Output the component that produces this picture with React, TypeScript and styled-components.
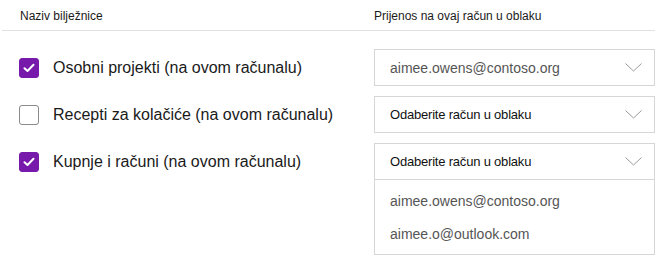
import React from "react";
import styled, { createGlobalStyle } from "styled-components";

const Global = createGlobalStyle`
  html, body { margin: 0; padding: 0; background: #ffffff; }
  body { font-family: "Liberation Sans", Arial, sans-serif; color: #1f1f1f; }
`;

const Page = styled.div`
  width: 653px;
  height: 260px;
  margin-left: 2px;
`;

const HeaderRow = styled.div`
  display: grid;
  grid-template-columns: 372px 281px;
  height: 30px;
  border-bottom: 1px solid #e1e1e1;
  align-items: center;
  font-size: 12px;
  color: #1a1a1a;
`;

const HeaderCell = styled.div<{ $pad: number }>`
  padding-left: ${(p) => p.$pad}px;
  padding-top: 2px;
`;

const Body = styled.div`
  display: flex;
  flex-direction: column;
  gap: 10px;
  padding-top: 18px;
`;

const Row = styled.div`
  display: grid;
  grid-template-columns: 372px 281px;
  align-items: start;
`;

const NameCell = styled.label`
  height: 37px;
  display: flex;
  align-items: center;
  gap: 14px;
  padding-left: 17px;
  font-size: 16px;
  color: #1a1a1a;
`;

const Check = styled.span<{ $on: boolean }>`
  box-sizing: border-box;
  width: 20px;
  height: 20px;
  border-radius: 3px;
  display: flex;
  align-items: center;
  justify-content: center;
  background: ${(p) => (p.$on ? "#7719aa" : "#ffffff")};
  border: 1px solid ${(p) => (p.$on ? "#7719aa" : "#8a8a8a")};
`;

const Select = styled.div`
  box-sizing: border-box;
  width: 281px;
  border: 1px solid #d6d6d6;
  background: #fff;
`;

const SelectHead = styled.div<{ $muted: boolean }>`
  height: 35px;
  display: flex;
  align-items: center;
  justify-content: space-between;
  padding: 0 12px 0 15px;
  font-size: ${(p) => (p.$muted ? "14px" : "13px")};
  color: ${(p) => (p.$muted ? "#555555" : "#111111")};
  ${(p) => (p.$muted ? "" : "letter-spacing: -0.2px;")}
`;

const Menu = styled.ul`
  margin: 0;
  padding: 4px 0 4px;
  list-style: none;
  background: #fff;
  border-top: 1px solid #d6d6d6;
`;

const MenuItem = styled.li`
  height: 33px;
  display: flex;
  align-items: center;
  padding-left: 15px;
  font-size: 14px;
  color: #555555;
`;

const Chevron = () => (
  <svg width="17" height="9" viewBox="0 0 17 9" fill="none">
    <path d="M0.5 0.5 L8.5 8 L16.5 0.5" stroke="#9a9a9a" strokeWidth="1" />
  </svg>
);

const Tick = () => (
  <svg width="12" height="10" viewBox="0 0 12 10" fill="none">
    <path d="M1.5 5.2 L4.5 8 L10.5 1.8" stroke="#ffffff" strokeWidth="2" strokeLinecap="round" strokeLinejoin="round" />
  </svg>
);

type Item = { name: string; on: boolean; value: string; muted: boolean; open?: boolean };

const items: Item[] = [
  { name: "Osobni projekti (na ovom računalu)", on: true, value: "aimee.owens@contoso.org", muted: true },
  { name: "Recepti za kolačiće (na ovom računalu)", on: false, value: "Odaberite račun u oblaku", muted: false },
  { name: "Kupnje i računi (na ovom računalu)", on: true, value: "Odaberite račun u oblaku", muted: false, open: true },
];

export default function App() {
  return (
    <Page>
      <Global />
      <HeaderRow>
        <HeaderCell $pad={18}>Naziv bilježnice</HeaderCell>
        <HeaderCell $pad={0}>Prijenos na ovaj račun u oblaku</HeaderCell>
      </HeaderRow>
      <Body>
        {items.map((it) => (
          <Row key={it.name}>
            <NameCell>
              <Check $on={it.on}>{it.on && <Tick />}</Check>
              {it.name}
            </NameCell>
            <Select>
              <SelectHead $muted={it.muted}>
                <span>{it.value}</span>
                <Chevron />
              </SelectHead>
              {it.open && (
                <Menu>
                  <MenuItem>aimee.owens@contoso.org</MenuItem>
                  <MenuItem>aimee.o@outlook.com</MenuItem>
                </Menu>
              )}
            </Select>
          </Row>
        ))}
      </Body>
    </Page>
  );
}
